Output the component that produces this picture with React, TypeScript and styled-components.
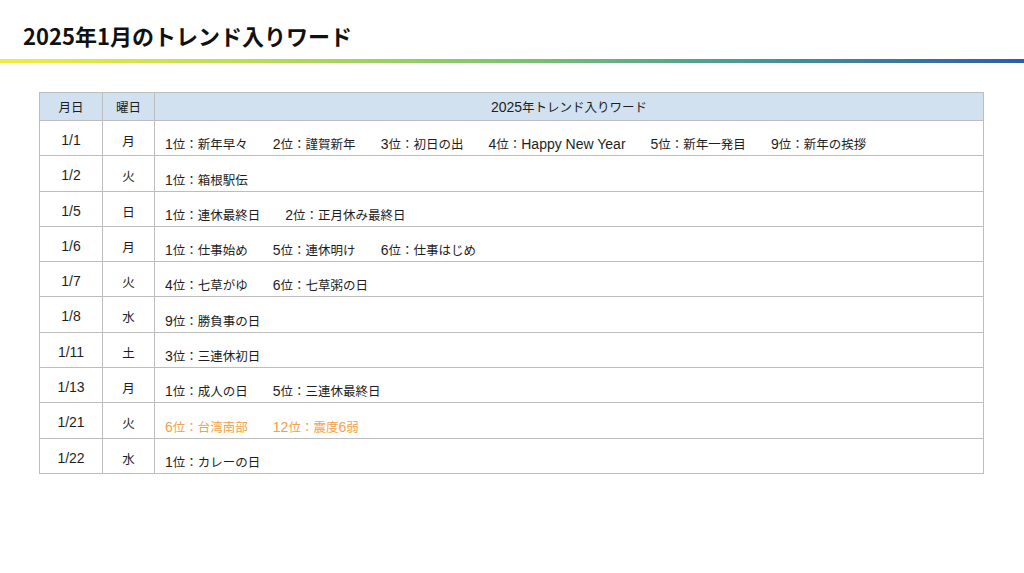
import React from "react";
import styled, { createGlobalStyle } from "styled-components";

const Global = createGlobalStyle`
  html, body { margin: 0; padding: 0; background: #ffffff; }
  body { width: 1024px; height: 573px; overflow: hidden; }
`;

const Page = styled.div`
  width: 1024px;
  height: 573px;
  background: #fff;
  display: flex;
  flex-direction: column;
`;

const Title = styled.h1`
  margin: 0;
  padding: 20px 0 0 23px;
  height: 39px;
  box-sizing: content-box;
  font-family: "Noto Sans CJK JP", sans-serif;
  font-weight: 700;
  font-size: 22px;
  line-height: 30px;
  color: #111;
`;

const Rule = styled.div`
  height: 4px;
  width: 1024px;
  background: linear-gradient(
    90deg,
    #f2ec3c 0%,
    #b9dc54 25%,
    #7cc46f 50%,
    #4a9a95 72%,
    #2b5ea9 100%
  );
`;

const TableWrap = styled.div`
  padding: 29px 0 0 39px;
`;

const Table = styled.table`
  border-collapse: collapse;
  width: 945px;
  table-layout: fixed;
  font-family: "Liberation Sans", "Noto Sans CJK JP", sans-serif;
  font-size: 12.5px;
  color: #1e1e1e;
`;

const Latin = styled.span`
  font-size: 14px;
`;

const HeadCell = styled.th<{ $w?: number }>`
  width: ${(p) => (p.$w ? `${p.$w}px` : "auto")};
  height: 28px;
  background: #d2e1f0;
  border: 1.5px solid #bdbdbd;
  font-weight: 400;
  text-align: center;
  vertical-align: middle;
  padding: 0 0 1px 0;
  box-sizing: border-box;
`;

const Row = styled.tr`
  height: 35.3px;
`;

const CenterCell = styled.td<{ $top?: number }>`
  border: 1.5px solid #bdbdbd;
  text-align: center;
  vertical-align: top;
  padding: ${(p) => p.$top ?? 11}px 0 0 0;
  line-height: 16px;
  box-sizing: border-box;
`;

const WordCell = styled.td<{ $alert?: boolean }>`
  border: 1.5px solid #bdbdbd;
  text-align: left;
  vertical-align: bottom;
  padding: 0 0 2px 10px;
  line-height: 16px;
  color: ${(p) => (p.$alert ? "#f3a04a" : "#1e1e1e")};
  white-space: pre;
`;

function Mixed({ text }: { text: string }) {
  const parts = text.split(/([\x20-\x7E]+)/).filter((s) => s.length > 0);
  return (
    <>
      {parts.map((p, i) =>
        /^[\x20-\x7E]+$/.test(p) ? <Latin key={i}>{p}</Latin> : <React.Fragment key={i}>{p}</React.Fragment>
      )}
    </>
  );
}

const rows: { d: string; w: string; t: string; alert?: boolean }[] = [
  { d: "1/1", w: "月", t: "1位：新年早々　　2位：謹賀新年　　3位：初日の出　　4位：Happy New Year　　5位：新年一発目　　9位：新年の挨拶" },
  { d: "1/2", w: "火", t: "1位：箱根駅伝" },
  { d: "1/5", w: "日", t: "1位：連休最終日　　2位：正月休み最終日" },
  { d: "1/6", w: "月", t: "1位：仕事始め　　5位：連休明け　　6位：仕事はじめ" },
  { d: "1/7", w: "火", t: "4位：七草がゆ　　6位：七草粥の日" },
  { d: "1/8", w: "水", t: "9位：勝負事の日" },
  { d: "1/11", w: "土", t: "3位：三連休初日" },
  { d: "1/13", w: "月", t: "1位：成人の日　　5位：三連休最終日" },
  { d: "1/21", w: "火", t: "6位：台湾南部　　12位：震度6弱", alert: true },
  { d: "1/22", w: "水", t: "1位：カレーの日" },
];

export default function App() {
  return (
    <Page>
      <Global />
      <Title>2025年1月のトレンド入りワード</Title>
      <Rule />
      <TableWrap>
        <Table>
          <thead>
            <tr>
              <HeadCell $w={63}>月日</HeadCell>
              <HeadCell $w={52}>曜日</HeadCell>
              <HeadCell>
                <Mixed text="2025年トレンド入りワード" />
              </HeadCell>
            </tr>
          </thead>
          <tbody>
            {rows.map((r) => (
              <Row key={r.d}>
                <CenterCell $top={11}>
                  <Mixed text={r.d} />
                </CenterCell>
                <CenterCell $top={13}>{r.w}</CenterCell>
                <WordCell $alert={r.alert}>
                  <Mixed text={r.t} />
                </WordCell>
              </Row>
            ))}
          </tbody>
        </Table>
      </TableWrap>
    </Page>
  );
}
